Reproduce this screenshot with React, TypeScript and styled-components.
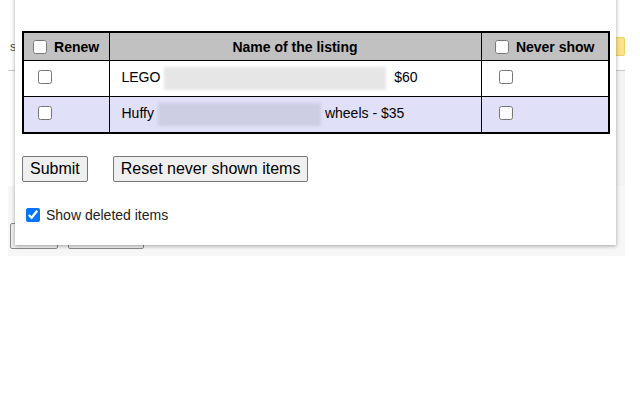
import React from 'react'
import styled, { createGlobalStyle } from 'styled-components'

const GlobalStyle = createGlobalStyle`
  html, body {
    margin: 0;
    padding: 0;
    background: #ffffff;
    font-family: 'Liberation Sans', Arial, sans-serif;
  }
  #root {
    position: relative;
    width: 640px;
    height: 400px;
    overflow: hidden;
  }
`

// page behind the popup
const Page = styled.div`
  display: flex;
  flex-direction: column;
  width: 617px;
  margin-left: 8px;
`

const TopBar = styled.div`
  height: 35px;
`

const Toolbar = styled.div`
  display: flex;
  align-items: center;
  justify-content: space-between;
  height: 22px;
  padding-left: 2px;
  font-size: 13px;
  color: #444;
`

const Badge = styled.span`
  width: 12px;
  height: 17px;
  background: #fbe38b;
  border: 1px solid #f1d160;
  border-radius: 2px;
`

const Divider = styled.div`
  margin-top: 13px;
  height: 1px;
  background: #c8c8c8;
`

const PageBody = styled.div`
  height: 115px;
  background: linear-gradient(to right, #ffffff 98%, #f4f4f4 98%);
`

const PageFooter = styled.div`
  display: flex;
  align-items: flex-end;
  gap: 10px;
  height: 70px;
  padding: 0 0 7px 2px;
  background: #f7f7f7;
  box-sizing: border-box;
`

const GhostButton = styled.div<{ w: number }>`
  width: ${({ w }) => w}px;
  height: 26px;
  box-sizing: border-box;
  border: 1px solid #8a8a8a;
  border-radius: 2px;
  background: #efefef;
`

// popup
const Popup = styled.div`
  position: absolute;
  left: 15px;
  top: -10px;
  width: 601px;
  padding: 41px 7px 22px 7px;
  box-sizing: border-box;
  background: #ffffff;
  box-shadow: 0 1px 4px rgba(0, 0, 0, 0.35);
  font-size: 14px;
  color: #000;
`

const Table = styled.table`
  width: 588px;
  table-layout: fixed;
  border-collapse: collapse;
  border: 2px solid #000;
`

const Th = styled.th`
  height: 27px;
  padding: 0;
  background: #c0c1c0;
  border: 1px solid #000;
  font-size: 14px;
  font-weight: 700;
  text-align: center;
  white-space: nowrap;
`

const Row = styled.tr<{ alt?: boolean }>`
  background: ${({ alt }) => (alt ? '#e0e0f8' : '#ffffff')};
`

const Td = styled.td<{ pad?: number }>`
  height: 35px;
  padding: 0 0 0 ${({ pad }) => pad ?? 12}px;
  border: 1px solid #000;
  vertical-align: middle;
  white-space: nowrap;
`

const Check = styled.input.attrs({ type: 'checkbox' })`
  width: 14px;
  height: 14px;
  margin: 0 3px 0 0;
  vertical-align: -2px;
`

const RowCheck = styled(Check)`
  display: block;
  margin: 0 0 4px 0;
`

const Blurred = styled.span<{ w: number; tone: string }>`
  display: inline-block;
  width: ${({ w }) => w}px;
  height: 23px;
  margin: 0 4px;
  vertical-align: middle;
  background: ${({ tone }) => tone};
  filter: blur(1.5px);
`

const Actions = styled.div`
  display: flex;
  gap: 25px;
  margin-top: 22px;
`

const Button = styled.button`
  height: 26px;
  padding: 0 7px;
  font-family: 'Liberation Sans', Arial, sans-serif;
  font-size: 16px;
  color: #000;
  background: #efefef;
  border: 1px solid #767676;
  border-radius: 2px;
`

const Option = styled.label`
  display: flex;
  align-items: center;
  gap: 3px;
  margin: 25px 0 0 4px;
  font-size: 14px;
  color: #222;
`

export default function App() {
  return (
    <>
      <GlobalStyle />
      <Page>
        <TopBar />
        <Toolbar>
          <span>s</span>
          <Badge />
        </Toolbar>
        <Divider />
        <PageBody />
        <PageFooter>
          <GhostButton w={48} />
          <GhostButton w={76} />
        </PageFooter>
      </Page>

      <Popup>
        <Table>
          <colgroup>
            <col style={{ width: 86 }} />
            <col />
            <col style={{ width: 128 }} />
          </colgroup>
          <thead>
            <tr>
              <Th>
                <Check /> Renew
              </Th>
              <Th>Name of the listing</Th>
              <Th>
                <Check /> Never show
              </Th>
            </tr>
          </thead>
          <tbody>
            <Row>
              <Td pad={14}>
                <RowCheck />
              </Td>
              <Td>
                LEGO
                <Blurred w={222} tone="#e6e6e6" />
                &nbsp;$60
              </Td>
              <Td pad={17}>
                <RowCheck />
              </Td>
            </Row>
            <Row alt>
              <Td pad={14}>
                <RowCheck />
              </Td>
              <Td>
                Huffy
                <Blurred w={163} tone="#cdcde3" />
                wheels - $35
              </Td>
              <Td pad={17}>
                <RowCheck />
              </Td>
            </Row>
          </tbody>
        </Table>
        <Actions>
          <Button>Submit</Button>
          <Button>Reset never shown items</Button>
        </Actions>
        <Option>
          <Check defaultChecked />
          Show deleted items
        </Option>
      </Popup>
    </>
  )
}
